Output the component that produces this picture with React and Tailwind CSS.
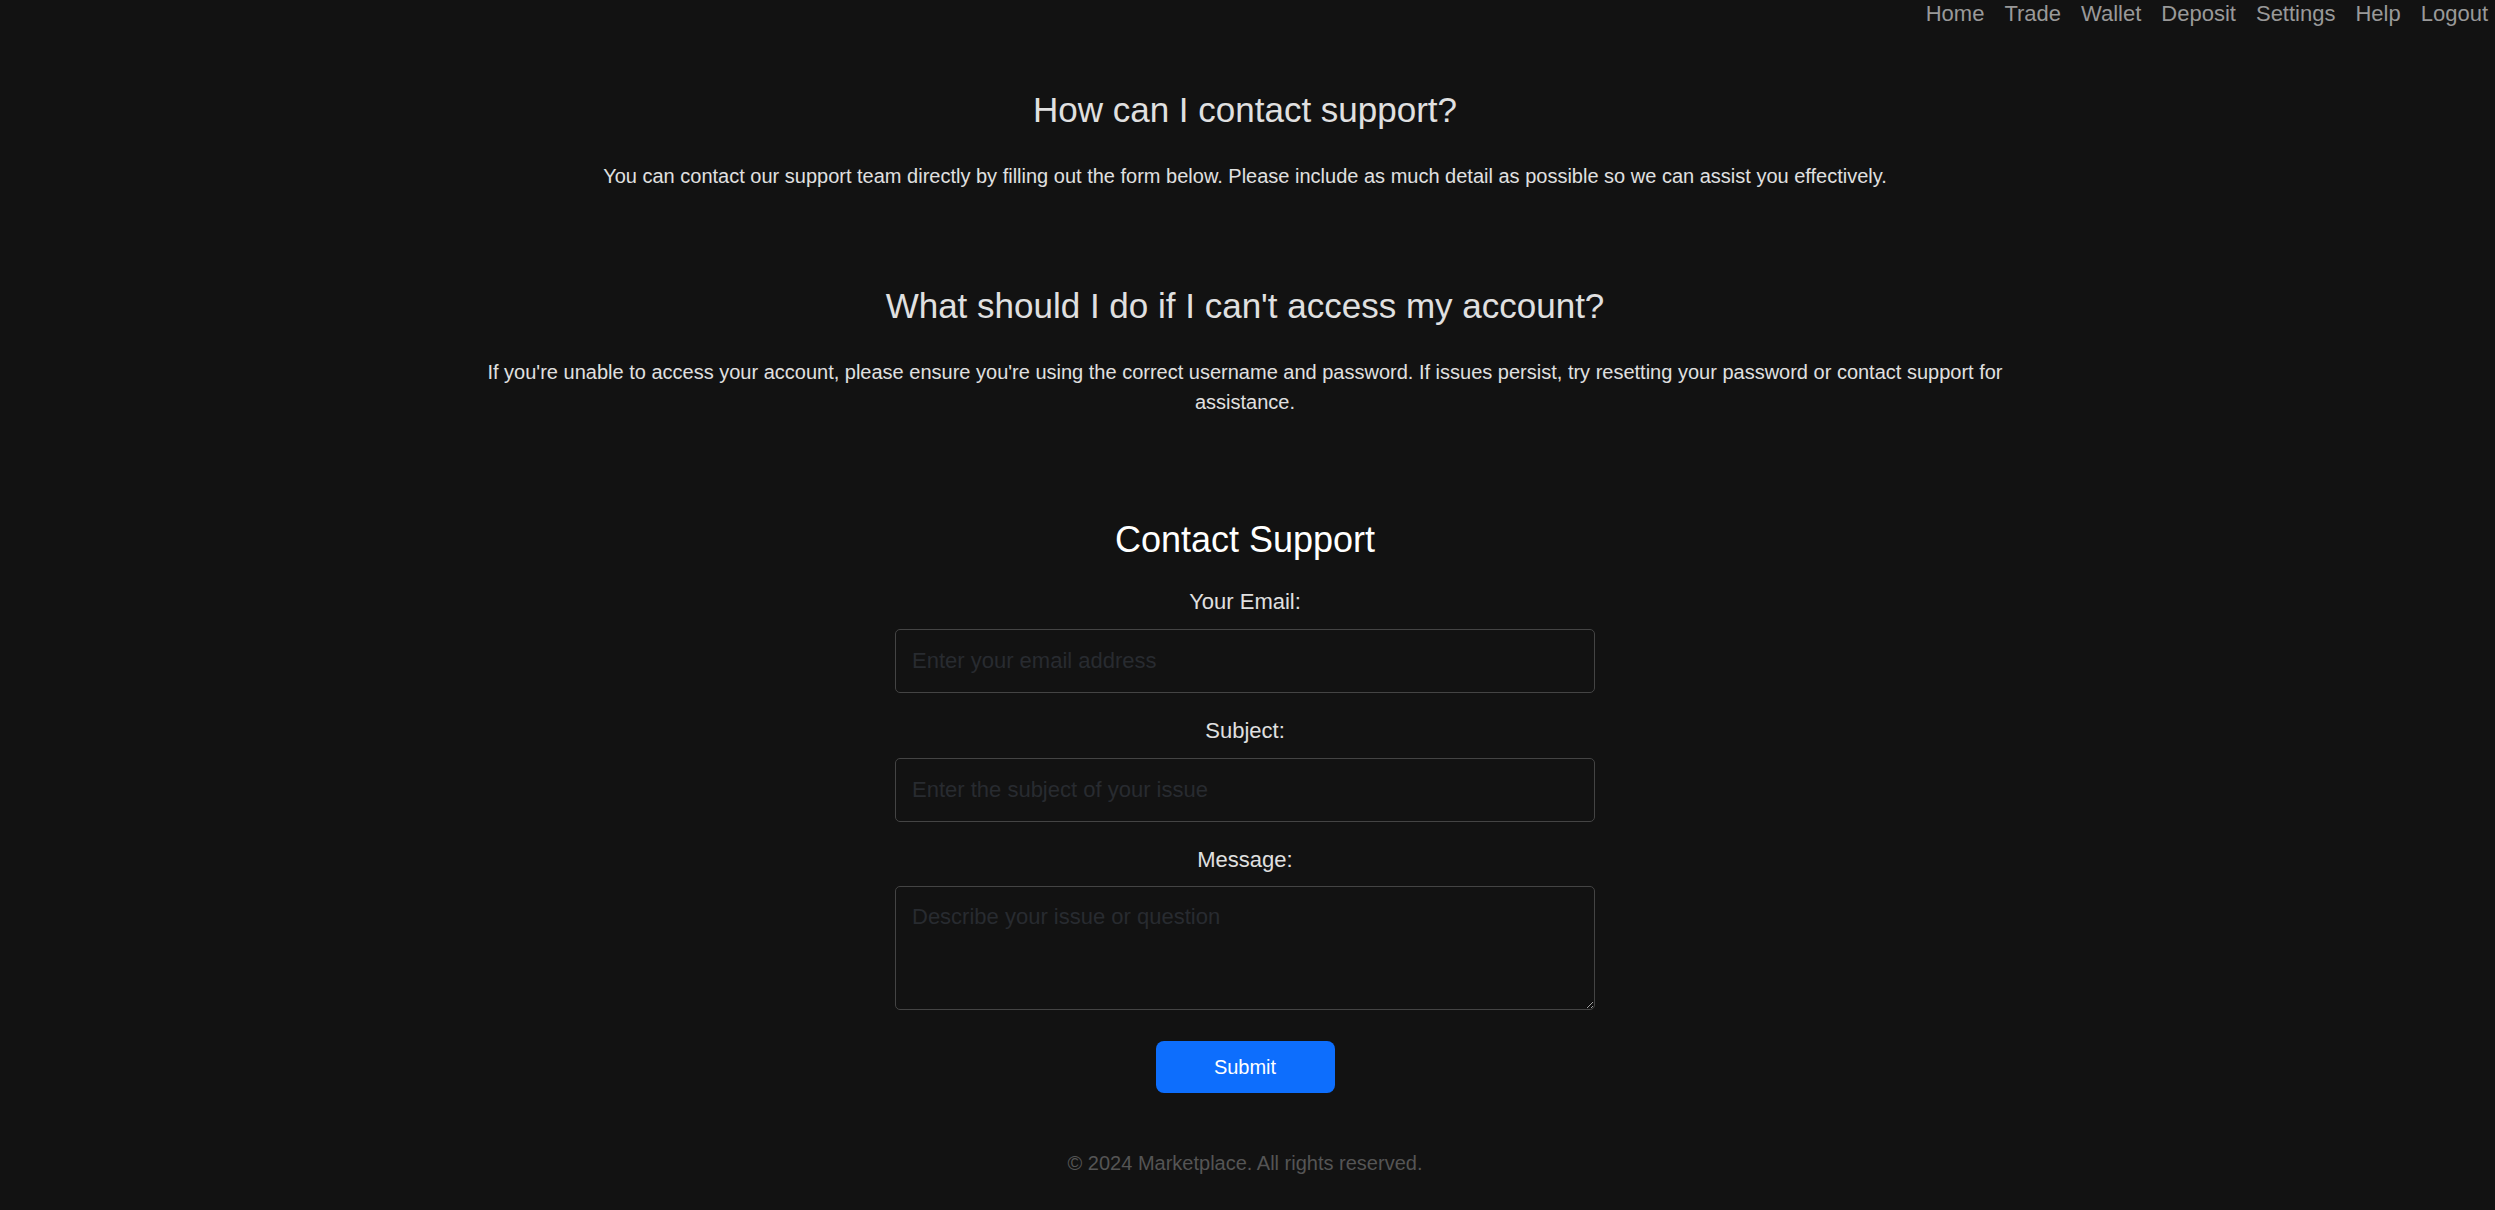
const NAV_LINKS = ['Home', 'Trade', 'Wallet', 'Deposit', 'Settings', 'Help', 'Logout'];

const FAQ = [
  {
    q: 'How can I contact support?',
    a: 'You can contact our support team directly by filling out the form below. Please include as much detail as possible so we can assist you effectively.',
  },
  {
    q: "What should I do if I can't access my account?",
    a: "If you're unable to access your account, please ensure you're using the correct username and password. If issues persist, try resetting your password or contact support for assistance.",
  },
];

function Field({ label, placeholder, first, textarea }) {
  const box =
    'w-full border border-[#444] rounded-[5px] bg-[#121212] px-[16px] text-[22px] text-[#e0e0e0] placeholder:text-[#282b30] outline-none';
  return (
    <>
      <label className={`${first ? 'mt-[27px]' : 'mt-[23px]'} block text-center text-[22px] leading-[30px] text-[#e0e0e0]`}>
        {label}
      </label>
      {textarea ? (
        <textarea className={`${box} mt-[11px] h-[124px] pt-[15px] leading-[30px]`} placeholder={placeholder} />
      ) : (
        <input type="text" className={`${box} mt-[12px] h-[64px]`} placeholder={placeholder} />
      )}
    </>
  );
}

export default function App() {
  return (
    <div className="min-h-[1210px] bg-[#121212] font-['Liberation_Sans',Arial,sans-serif]">
      {/* top nav */}
      <nav className="flex justify-end gap-[20px] pr-[7px] h-[28px] text-[22px] leading-[28px] text-[#999]">
        {NAV_LINKS.map(l => (
          <a key={l} href="#" className="hover:text-white">{l}</a>
        ))}
      </nav>

      <main className="flex flex-col items-center pr-[5px]">
        {FAQ.map((f, i) => (
          <section key={f.q} className={`${i === 0 ? 'mt-[62px]' : 'mt-[95px]'} w-[1570px] text-center`}>
            <h2 className="text-[35px] leading-[40px] font-normal text-[#e0e0e0]">{f.q}</h2>
            <p className="mt-[31px] text-[20px] leading-[30px] text-[#e0e0e0]">{f.a}</p>
          </section>
        ))}

        <section className="mt-[103px] flex flex-col items-center">
          <h2 className="text-[36px] leading-[40px] font-normal text-white">Contact Support</h2>
          <form className="w-[700px] flex flex-col" onSubmit={e => e.preventDefault()}>
            <Field first label="Your Email:" placeholder="Enter your email address" />
            <Field label="Subject:" placeholder="Enter the subject of your issue" />
            <Field textarea label="Message:" placeholder="Describe your issue or question" />
            <button
              type="submit"
              className="self-center mt-[31px] w-[179px] h-[52px] rounded-[8px] bg-[#0d6efd] text-white text-[20px]"
            >
              Submit
            </button>
          </form>
        </section>

        <footer className="mt-[55px] pb-[33px] text-[20px] leading-[30px] text-[#555] text-center">
          © 2024 Marketplace. All rights reserved.
        </footer>
      </main>
    </div>
  );
}
